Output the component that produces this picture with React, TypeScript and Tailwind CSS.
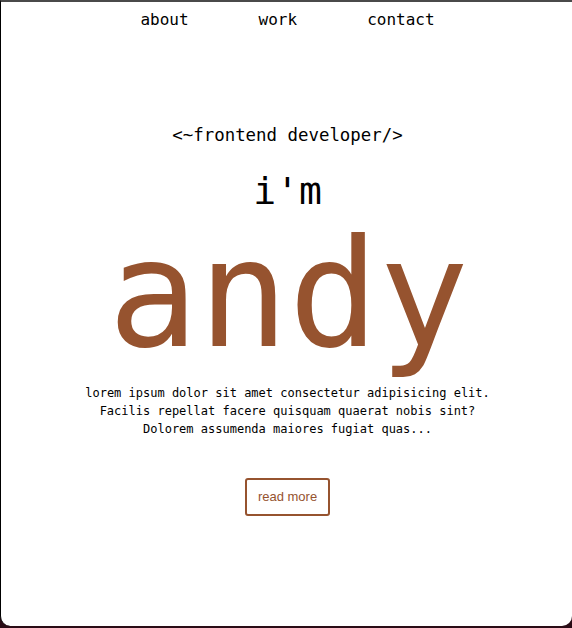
import React from "react";

export default function App() {
  const mono = { fontFamily: '"DejaVu Sans Mono", monospace' };
  return (
    <div className="w-[572px] h-[628px] bg-[#2a0c16] overflow-hidden">
      <div
        className="w-[572px] h-[626px] bg-white border-t-2 border-t-[#4a4a4a] border-l-[1.5px] border-l-black rounded-b-[10px] flex flex-col items-center text-black"
        style={mono}
      >
        <nav className="pt-[6px] flex gap-[70px] text-[16px] leading-[24px] ml-[2px]">
          <a>about</a>
          <a>work</a>
          <a>contact</a>
        </nav>
        <div className="mt-[91px] text-[17.4px] leading-[24px] ml-[2px]">&lt;~frontend developer/&gt;</div>
        <div className="mt-[21px] text-[38px] leading-[46px] ml-[2px]">i'm</div>
        <div className="mt-[5px] text-[150px] leading-[150px] text-[#96532f] ml-[4px]">andy</div>
        <p className="mt-[15px] text-[12px] leading-[18px] text-center ml-[2px]">
          lorem ipsum dolor sit amet consectetur adipisicing elit.
          <br />
          Facilis repellat facere quisquam quaerat nobis sint?
          <br />
          Dolorem assumenda maiores fugiat quas...
        </p>
        <button
          className="mt-[40px] ml-[2px] border-2 border-[#96532f] rounded-[3px] px-[11px] py-[9px] text-[13px] leading-[16px] text-[#96532f]"
          style={{ fontFamily: '"Liberation Sans", Arial, sans-serif' }}
        >
          read more
        </button>
      </div>
    </div>
  );
}
